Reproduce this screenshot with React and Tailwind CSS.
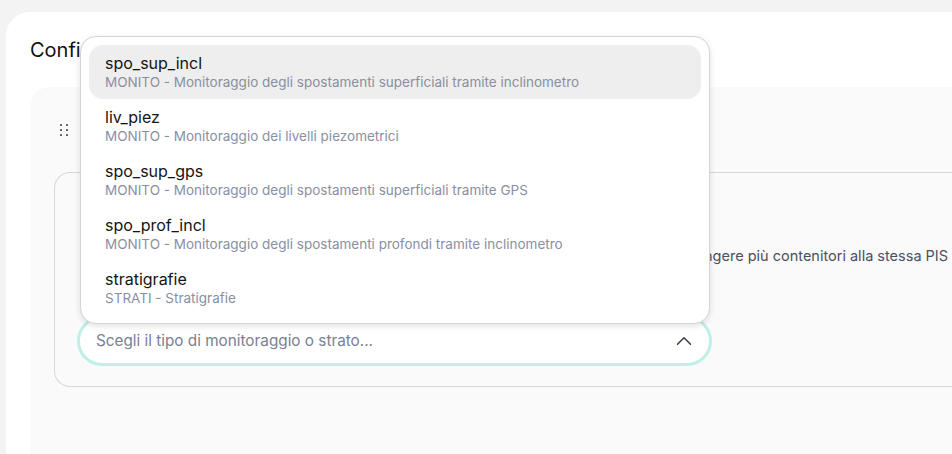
import { ChevronUp } from 'lucide-react';

const options = [
  { code: 'spo_sup_incl', desc: 'MONITO - Monitoraggio degli spostamenti superficiali tramite inclinometro' },
  { code: 'liv_piez', desc: 'MONITO - Monitoraggio dei livelli piezometrici' },
  { code: 'spo_sup_gps', desc: 'MONITO - Monitoraggio degli spostamenti superficiali tramite GPS' },
  { code: 'spo_prof_incl', desc: 'MONITO - Monitoraggio degli spostamenti profondi tramite inclinometro' },
  { code: 'stratigrafie', desc: 'STRATI - Stratigrafie' },
];

function DragHandle() {
  return (
    <svg width="12" height="14" viewBox="0 0 12 14" className="text-[#5b5f6b]">
      {[0, 1].map((c) =>
        [0, 1, 2].map((r) => (
          <rect key={`${c}-${r}`} x={c * 6} y={1 + r * 5} width="2" height="2" rx="0.5" fill="currentColor" />
        ))
      )}
    </svg>
  );
}

export default function App() {
  return (
    <div className="w-[952px] h-[454px] overflow-hidden bg-[#f3f3f3] pl-[6px] pt-[12px] font-['Inter',sans-serif]">
      <div className="w-[1100px] h-[600px] bg-white rounded-tl-[24px] px-6 pt-6">
        <h1 className="text-[20px] leading-[28px] text-[#111] font-normal">Configurazione contenitori</h1>

        <div className="mt-[23px] bg-[#fafafa] rounded-tl-[20px] h-[500px] px-6 pt-[23px]">
          <div className="h-[40px] flex items-center pl-[6px]">
            <DragHandle />
          </div>

          <div className="mt-[22px] border border-[#d6d6de] rounded-l-[16px] border-r-0 px-[22px] pt-[22px] pb-[20px]">
            <div className="h-6" />
            <p className="mt-[27px] pl-[12px] text-[14.5px] leading-5 text-[#4b5060] whitespace-nowrap">
              Seleziona il tipo di monitoraggio o strato da associare al punto di misura. È possibile aggiungere più contenitori alla stessa PIS con tipi diversi.
            </p>

            <div className="relative mt-[50px] w-[635px]">
              <button className="w-full h-[50px] rounded-full border-[3px] border-[#c0efe9] bg-white pl-4 pr-[12px] flex items-center justify-between">
                <span className="text-[15.3px] text-[#7b8091]">Scegli il tipo di monitoraggio o strato...</span>
                <ChevronUp size={26} strokeWidth={1.4} className="text-[#3a3f4c]" />
              </button>

              <div className="absolute left-[3px] bottom-[42px] w-[630px] bg-white border border-[#d3d3dc] rounded-[16px] shadow-[0_2px_6px_rgba(0,0,0,0.12)] p-2">
                {options.map((o, i) => (
                  <div
                    key={o.code}
                    className={`h-[54px] px-4 flex flex-col justify-center rounded-[14px] ${i === 0 ? 'bg-[#eeeeee]' : ''}`}
                  >
                    <div className="text-[16px] leading-[20px] text-[#141414]">{o.code}</div>
                    <div className="text-[13.5px] leading-[18px] text-[#8a8fa0]">{o.desc}</div>
                  </div>
                ))}
              </div>
            </div>
          </div>
        </div>
      </div>
    </div>
  );
}
